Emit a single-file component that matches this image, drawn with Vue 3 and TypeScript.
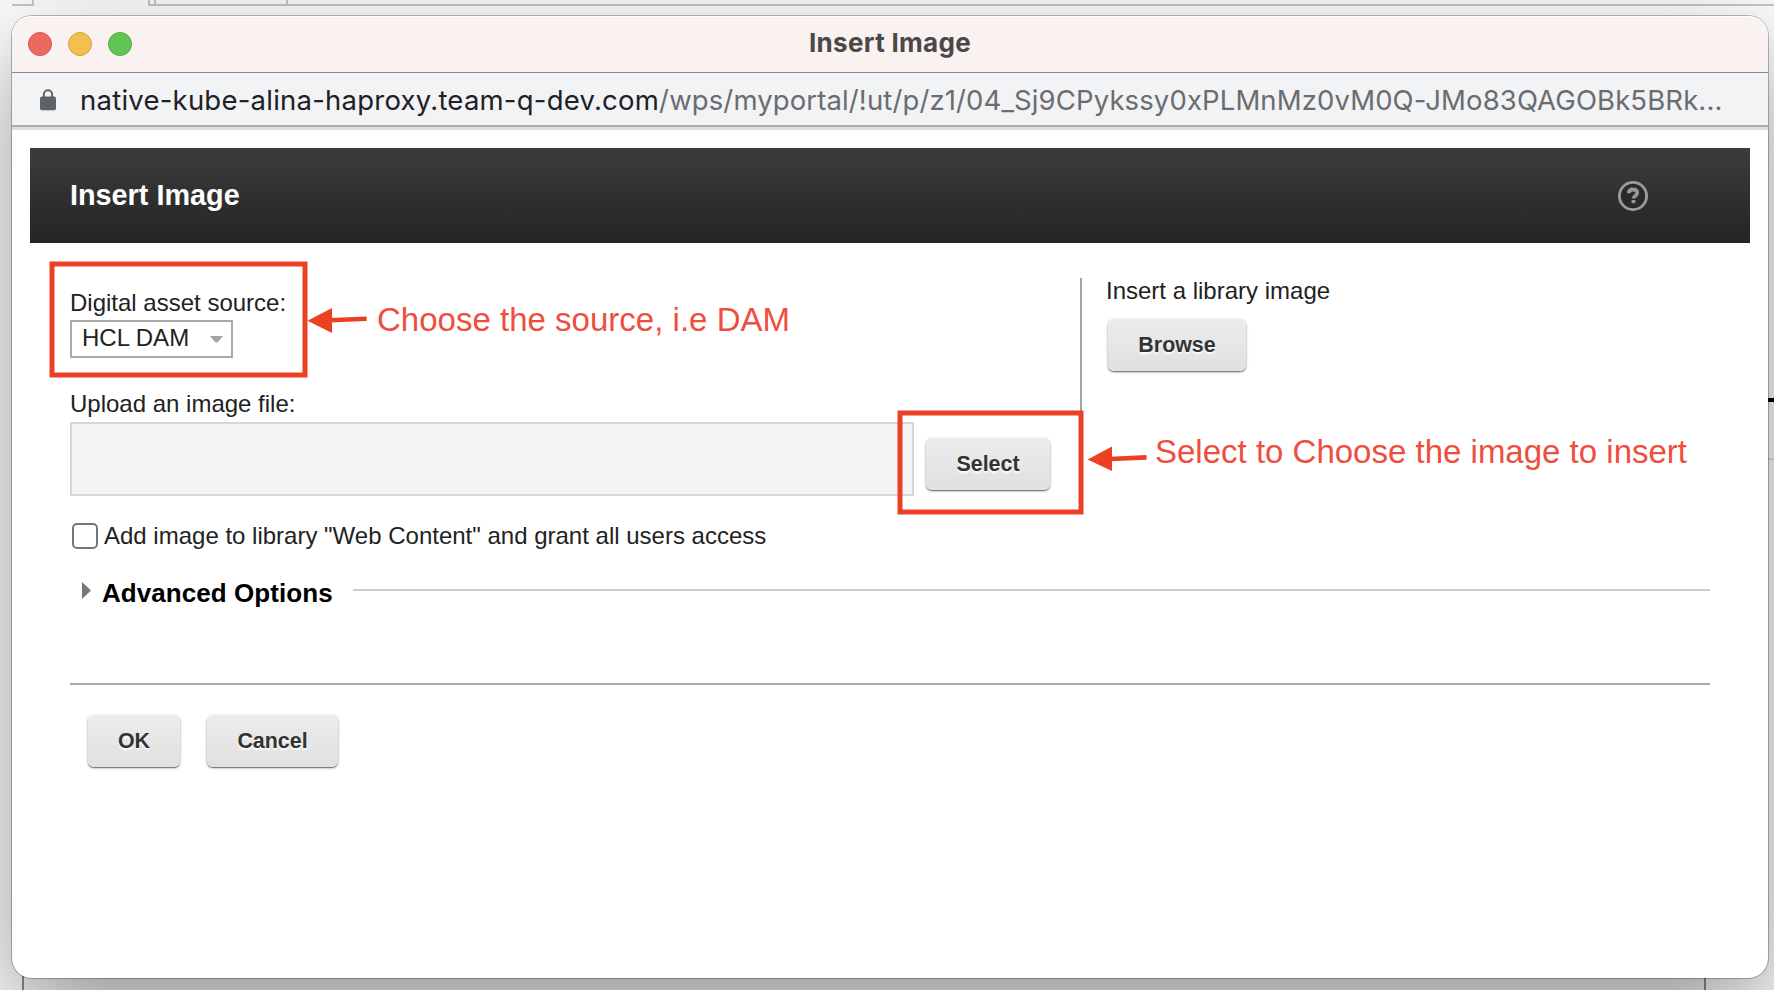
<script setup lang="ts">
import { ref } from 'vue'

const host = 'native-kube-alina-haproxy.team-q-dev.com'
const path = '/wps/myportal/!ut/p/z1/04_Sj9CPykssy0xPLMnMz0vM0Q-JMo83QAGOBk5BRk...'
const lights = ['red', 'amber', 'green']
const source = ref('HCL DAM')
const addToLibrary = ref(false)
</script>

<template>
  <div class="desktop">
    <svg class="behind" width="1774" height="990" viewBox="0 0 1774 990" aria-hidden="true">
      <rect x="23" y="970" width="1682" height="20" fill="#f6f6f6" />
      <rect x="0" y="0" width="1774" height="5" fill="#fafafa" />
      <path d="M12 5H33V0M149 0V5H1774M155 0V5M287 0V5" fill="none" stroke="#c6c6c6" stroke-width="2" />
      <path d="M23 970V990M1705 970V990" stroke="#8c8c8c" stroke-width="2" />
      <path d="M1766 400H1774" stroke="#000" stroke-width="4" />
      <path d="M1766 459H1774" stroke="#e4e4e4" stroke-width="2" />
    </svg>

    <section class="window">
      <header class="titlebar">
        <div class="lights">
          <i v-for="l in lights" :key="l" class="light" :class="l"></i>
        </div>
        <span class="wintitle">Insert Image</span>
      </header>

      <div class="urlbar">
        <svg class="lock" width="16" height="22" viewBox="0 0 16 22">
          <path d="M3.9 9V5.4a4.1 4.1 0 0 1 8.2 0V9" fill="none" stroke="#5f6368" stroke-width="2" />
          <rect x="0" y="7.6" width="16" height="13.6" rx="1.8" fill="#5f6368" />
        </svg>
        <span class="host">{{ host }}</span><span class="path">{{ path }}</span>
      </div>

      <div class="banner">
        <h1>Insert Image</h1>
        <svg class="help" width="32" height="32" viewBox="0 0 32 32">
          <circle cx="16" cy="16" r="13.6" fill="#2a2a2a" stroke="#9c9c9c" stroke-width="2.8" />
          <path d="M11.8 13.2c0-2.6 1.8-3.7 4.2-3.7 2.4 0 4.2 1.2 4.2 3.3 0 2.9-3.6 2.8-3.6 5.8" fill="none" stroke="#969696" stroke-width="3.8" />
          <rect x="14.6" y="20" width="3.8" height="3.2" fill="#969696" />
        </svg>
      </div>

      <main class="content">
        <div class="columns">
          <div class="left">
            <div class="label">Digital asset source:</div>
            <div class="combo">
              <span>{{ source }}</span>
              <svg width="13" height="7" viewBox="0 0 13 7"><path d="M0 0H13L8.4 5.6Q6.5 7.4 4.6 5.6Z" fill="#a3a3a3" /></svg>
            </div>
            <div class="label upload">Upload an image file:</div>
            <div class="filerow">
              <div class="file"></div>
              <button class="btn select">Select</button>
            </div>
          </div>
          <div class="right">
            <div class="label lib">Insert a library image</div>
            <button class="btn browse">Browse</button>
          </div>
        </div>

        <label class="check">
          <input v-model="addToLibrary" type="checkbox" />
          <span>Add image to library "Web Content" and grant all users access</span>
        </label>

        <div class="advanced">
          <svg width="9" height="17" viewBox="0 0 9 17"><path d="M0 0L9 8.5L0 17Z" fill="#777" /></svg>
          <h2>Advanced Options</h2>
          <i class="rule"></i>
        </div>

        <footer class="actions">
          <button class="btn ok">OK</button>
          <button class="btn cancel">Cancel</button>
        </footer>
      </main>
    </section>

    <svg class="notes" width="1774" height="990" viewBox="0 0 1774 990">
      <g fill="none" stroke="#ec4025" stroke-width="5">
        <rect x="52" y="264" width="253" height="111" />
        <rect x="900" y="413" width="181" height="99" />
        <path d="M330 320.3L366.7 318.8M1110 459L1146.6 457.4" stroke-width="4.6" />
      </g>
      <path d="M307.5 320.7L332 308V333ZM1087.5 459.5L1112 446.5V471Z" fill="#ec4025" />
      <text x="377" y="331" textLength="413">Choose the source, i.e DAM</text>
      <text x="1155" y="463" textLength="532">Select to Choose the image to insert</text>
    </svg>
  </div>
</template>

<style>
body {
  margin: 0;
  overflow: hidden;
}
</style>

<style scoped>
.desktop {
  position: relative;
  box-sizing: border-box;
  width: 1774px;
  height: 990px;
  padding: 16px 6px 12px 12px;
  overflow: hidden;
  background: #fdfdfd;
  font-family: "Liberation Sans", Arial, sans-serif;
  color: #222;
}
.behind,
.notes {
  position: absolute;
  left: 0;
  top: 0;
}
.notes {
  pointer-events: none;
}
.notes text {
  font-size: 33px;
  fill: #ee4e3e;
}
.window {
  position: relative;
  height: 962px;
  border-radius: 20px;
  background: #fff;
  box-shadow: 0 0 0 1px rgba(0, 0, 0, 0.26), 0 36px 100px rgba(0, 0, 0, 0.4);
}
.titlebar {
  box-sizing: border-box;
  display: grid;
  grid-template-columns: 120px 1fr 120px;
  align-items: center;
  height: 57px;
  padding: 0 16px;
  border-bottom: 1px solid #8b898a;
  border-radius: 20px 20px 0 0;
  background: #faf1f1;
  box-shadow: inset 0 1px #fff;
}
.lights {
  display: flex;
  gap: 16px;
}
.light {
  box-sizing: border-box;
  width: 24px;
  height: 24px;
  border: 1px solid #d5544a;
  border-radius: 50%;
  background: #ec695e;
}
.light.amber {
  border-color: #d9a13c;
  background: #f5bf4f;
}
.light.green {
  border-color: #52a93f;
  background: #62c655;
}
.wintitle {
  padding-bottom: 2px;
  text-align: center;
  font: 700 26px/52px Inter, sans-serif;
  letter-spacing: 0.3px;
  color: #4a4848;
}
.urlbar {
  box-sizing: border-box;
  display: flex;
  align-items: center;
  height: 57px;
  padding: 0 0 4px 28px;
  background: linear-gradient(#f1f3f5 0 52px, #acaeb0 52px 54px, #dddddf 54px 57px);
  font: 27.5px/52px Inter, sans-serif;
  white-space: pre;
}
.lock {
  margin-right: 24px;
}
.host {
  letter-spacing: 0.23px;
  color: #202124;
}
.path {
  letter-spacing: 0.12px;
  color: #6a6c6f;
}
.banner {
  display: flex;
  align-items: center;
  justify-content: space-between;
  height: 95px;
  margin: 18px 18px 0;
  padding: 0 101px 0 40px;
  background: linear-gradient(#3c3c3c, #242424);
}
h1 {
  margin: 0;
  padding-bottom: 2px;
  font-size: 28.8px;
  line-height: 92px;
  color: #fff;
}
.content {
  padding: 34px 58px 0;
}
.columns {
  display: flex;
  height: 245px;
}
.left {
  width: 1010px;
  padding-top: 12px;
}
.right {
  box-sizing: border-box;
  height: 135px;
  margin-top: 1px;
  padding-left: 26px;
  border-left: 2px solid #a2a2a2;
}
.label {
  font-size: 24px;
  line-height: 28px;
  white-space: nowrap;
}
.combo {
  box-sizing: border-box;
  display: flex;
  align-items: center;
  justify-content: space-between;
  width: 163px;
  height: 38px;
  margin-top: 3px;
  padding: 0 8px 0 10px;
  border: 2px solid #a9a9a9;
  font-size: 24px;
  line-height: 32px;
}
.combo span {
  padding-bottom: 2px;
}
.upload {
  margin-top: 32px;
}
.filerow {
  display: flex;
  gap: 12px;
  margin-top: 4px;
}
.file {
  box-sizing: border-box;
  width: 844px;
  height: 74px;
  border: 2px solid #d7d7d7;
  background: #f4f4f4;
}
.btn {
  height: 52px;
  padding: 0;
  border: 0;
  border-radius: 6px;
  background: linear-gradient(#ececec, #e0e0e0);
  box-shadow: 0 1px 1px #777, 0 1px 3px rgba(0, 0, 0, 0.3);
  font: bold 21.4px/52px "Liberation Sans", Arial, sans-serif;
  text-shadow: 0 2px 2px #fff;
  color: #333;
}
.select {
  width: 124px;
  margin-top: 16px;
}
.lib {
  margin: -1px 0 0 -2px;
}
.browse {
  width: 138px;
  margin-top: 14px;
}
.check {
  display: flex;
  align-items: center;
  height: 28px;
  font-size: 24px;
  line-height: 28px;
}
.check input {
  appearance: none;
  box-sizing: border-box;
  width: 26px;
  height: 26px;
  margin: 0 6px 0 2px;
  border: 2px solid #767676;
  border-radius: 5px;
  background: #fff;
}
.advanced {
  display: flex;
  align-items: flex-start;
  height: 105px;
  margin-top: 28px;
  padding-left: 12px;
}
.advanced svg {
  margin-top: 4px;
}
h2 {
  width: 231px;
  margin: 0 20px 0 11px;
  font-size: 26px;
  line-height: 30px;
  letter-spacing: 0.06px;
  white-space: nowrap;
  color: #000;
}
.rule {
  flex: 1;
  height: 2px;
  margin-top: 11px;
  background: #ccc;
}
.actions {
  display: flex;
  gap: 27px;
  padding: 30px 18px 0;
  border-top: 2px solid #a9a9a9;
}
.ok {
  width: 92px;
}
.cancel {
  width: 131px;
}
</style>
